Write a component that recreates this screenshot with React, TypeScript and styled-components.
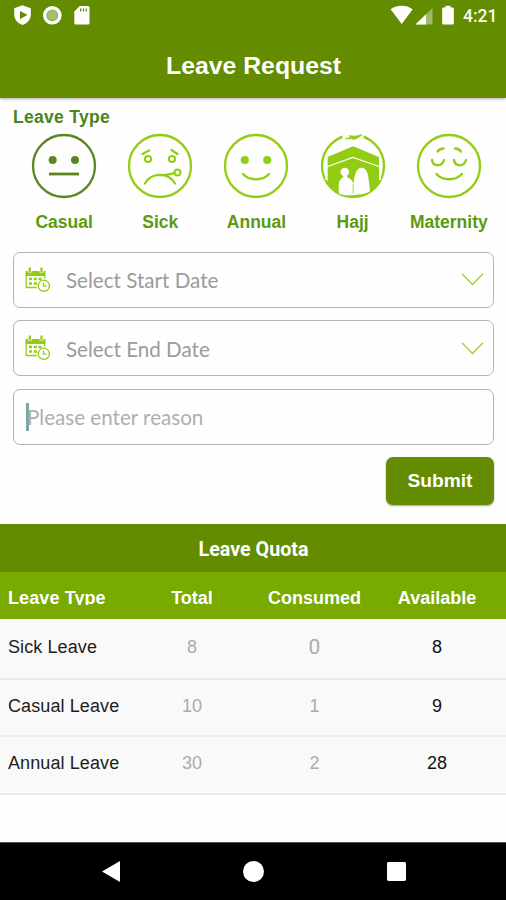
import React from "react";
import styled, { createGlobalStyle } from "styled-components";

const DARK = "#638c00";
const MID = "#78aa00";
const LIME = "#93cd13";
const LABEL = "#5b9a10";

const GlobalStyle = createGlobalStyle`
  * { box-sizing: border-box; }
  body { margin: 0; background: #fff; font-family: "Liberation Sans", Arial, sans-serif; }
  svg { display: block; }
`;

const Screen = styled.div`
  width: 506px;
  height: 900px;
  display: flex;
  flex-direction: column;
  background: #fefefe;
  overflow: hidden;
`;

const Header = styled.header`
  height: 98px;
  flex: none;
  background: ${DARK};
  box-shadow: 0 1px 3px rgba(60, 40, 50, 0.4);
  color: #fff;
`;

const StatusBar = styled.div`
  height: 32px;
  display: flex;
  justify-content: space-between;
`;

const Clock = styled.span`
  font: 500 17.5px/32px Roboto, sans-serif;
  color: #f6faec;
  width: 43px;
`;

const StatusGroup = styled.div`
  display: flex;
`;

const Title = styled.h1`
  margin: 0;
  padding-left: 1px;
  font-size: 24.8px;
  line-height: 68px;
  font-weight: 700;
  text-align: center;
`;

const Form = styled.section`
  height: 426px;
  flex: none;
  padding: 10px 12px 0 13px;
  display: flex;
  flex-direction: column;
`;

const SectionLabel = styled.div`
  height: 20px;
  font-size: 17.5px;
  line-height: 19px;
  letter-spacing: 0.3px;
  font-weight: 700;
  color: #4b8419;
`;

const TypeList = styled.div`
  display: flex;
  margin: 5px 0 0 3px;
  height: 118.5px;
`;

const TypeItem = styled.div`
  width: 96.2px;
  flex: none;
  display: flex;
  flex-direction: column;
  align-items: center;
`;

const TypeName = styled.span`
  margin-top: 13px;
  font-size: 17.5px;
  line-height: 20px;
  font-weight: 700;
  color: ${LABEL};
`;

const Field = styled.div<{ $muted?: boolean }>`
  height: 56px;
  margin-bottom: 12.5px;
  flex: none;
  border: 1.5px solid #b4b4b4;
  border-radius: 7px;
  display: flex;
  align-items: center;
  padding: 0 9px 0 11px;
  font: 400 20.6px/30px Lato, sans-serif;
  color: ${(p) => (p.$muted ? "#aeaeae" : "#9b9b9b")};
`;

const FieldText = styled.span`
  flex: 1;
  margin-left: 15px;
  padding-top: 1px;
`;

const ReasonText = styled.span``;

const Caret = styled.i`
  width: 3px;
  height: 28px;
  margin: 0 -2px 0 1px;
  background: #7ba89a;
`;

const Submit = styled.button`
  align-self: flex-end;
  width: 108px;
  height: 48px;
  padding: 0;
  border: 0;
  border-radius: 7px;
  background: ${DARK};
  box-shadow: 0 1px 2px rgba(0, 0, 0, 0.35);
  color: #fff;
  font: 700 19.2px/48px "Liberation Sans", Arial, sans-serif;
`;

const QuotaTitle = styled.h2`
  margin: 0;
  padding-left: 1px;
  height: 48px;
  flex: none;
  background: ${DARK};
  color: #fff;
  font: 700 19.7px/51px Roboto, sans-serif;
  text-align: center;
`;

const Row = styled.div<{ $height: number }>`
  height: ${(p) => p.$height}px;
  flex: none;
  display: grid;
  grid-template-columns: 122.5px 123px 122px 123px;
  padding-left: 8px;
  align-items: center;
  background: #f9f9f9;
  border-bottom: 2px solid #ebebeb;
  font-size: 18px;
`;

const HeadRow = styled(Row)`
  background: ${MID};
  border-bottom: 0;
  color: #fff;
  font-weight: 700;
  padding-top: 5px;
`;

const HeadCell = styled.span<{ $left?: boolean }>`
  line-height: 20px;
  text-align: center;
  ${(p) =>
    p.$left &&
    `height: 17px; margin-bottom: 3px; overflow: hidden; text-align: left; letter-spacing: 0.1px;`}
`;

const NameCell = styled.span`
  color: #1d1d1d;
  padding-bottom: 3px;
  letter-spacing: 0.1px;
`;

const NumberCell = styled.span<{ $strong?: boolean; $large?: boolean }>`
  text-align: center;
  padding-bottom: 3px;
  color: ${(p) => (p.$strong ? "#111" : "#ababab")};
  ${(p) => p.$large && `font: 400 21px/24px Roboto, sans-serif;`}
`;

const NavBar = styled.nav`
  margin-top: auto;
  height: 58px;
  flex: none;
  background: #000;
  border-top: 1px solid #555;
  display: grid;
  grid-template-columns: 181px 145px 180px;
  align-items: center;
`;

const NavSlot = styled.div<{ $align?: string }>`
  display: flex;
  justify-content: ${(p) => p.$align || "center"};
  padding: 0 61px 0 61px;
`;

type Kind = "casual" | "sick" | "annual" | "hajj" | "maternity";

function Face({ kind }: { kind: Kind }) {
  const c = kind === "casual" ? "#5c8620" : LIME;
  return (
    <svg width="66" height="66" viewBox="0 0 66 66" fill="none" stroke={c} strokeWidth="2.3" strokeLinecap="round">
      {kind !== "hajj" && <circle cx="33" cy="33" r="31" />}
      {kind === "casual" && (
        <>
          <circle cx="21.7" cy="27" r="4" fill={c} stroke="none" />
          <circle cx="44" cy="27" r="4" fill={c} stroke="none" />
          <path d="M18 41h30" strokeWidth="2.8" strokeLinecap="butt" />
        </>
      )}
      {kind === "annual" && (
        <>
          <circle cx="21.8" cy="27" r="4.1" fill={c} stroke="none" />
          <circle cx="44.3" cy="27" r="4.1" fill={c} stroke="none" />
          <path d="M20 41c6 7 20 7 26 0" />
        </>
      )}
      {kind === "sick" && (
        <>
          <circle cx="21" cy="26" r="3.1" strokeWidth="2" />
          <circle cx="45" cy="26" r="3.1" strokeWidth="2" />
          <path d="M15.500 21l6.500-3.500M44.500 17l6 4M18 50.500c6-11 23-12 30 0M31 42c6 1 12-1 16.500-2" />
          <circle cx="50.500" cy="39.500" r="3" strokeWidth="2" />
        </>
      )}
      {kind === "maternity" && (
        <path d="M16 27c1 7 10 7 12 0M38 27c1 7 10 7 12 0M21.500 18.500c1.500-2 4-3 6-3M39 15.500c2.500 0 4.500 1 6 3M20.500 41c6 7 19 7 25.500 0" />
      )}
      {kind === "hajj" && (
        <>
          <circle cx="33" cy="33" r="31" />
          <path d="M22.500 0h21v8h-21z" fill="#fefefe" stroke="none" />
          <path
            d="M7.500 24L33 13.300l26 10.700V49C52 60 44 63.800 33 63.800S14 60 7.500 49z"
            fill={c}
            stroke="none"
          />
          <path d="M7.500 33.500L33 24.500l26 9" stroke="#fefefe" strokeWidth="1.300" />
          <path d="M6.300 23v24M60 23v24" stroke="#fefefe" strokeWidth="2" strokeLinecap="butt" />
          <circle cx="24.800" cy="39" r="4.300" fill="#fefefe" stroke="none" />
          <path
            d="M19.500 61c-1-4-1.200-8-.3-12 .6-2.500 2.300-3.800 4-4.500V41h4v3.500c3 .7 5.300 2.800 6 6.500.8-3.500 1.200-7.500 2.300-10.500 1.200-3.800 3.500-5.700 6-5.700 4.200 0 6 4 6.700 8.700.6 5 1.800 11 1.600 15-5 3.300-24 5-30.300 2.500z"
            fill="#fefefe"
            stroke="none"
          />
          <path d="M33.200 51.500v9" strokeWidth=".8" />
          <path d="M25.500 5.800l6-1.600-2.500-1.500 6 .5 7-1.400-3.500 2.600-4.500 2-2-.6z" fill={c} stroke={c} strokeWidth=".8" />
        </>
      )}
    </svg>
  );
}

function CalendarClock() {
  return (
    <svg width="26" height="26" viewBox="0 0 26 26" fill="none" stroke={LIME} strokeWidth="1.300">
      <path d="M.5 9V4h20v5z" fill={LIME} stroke="none" />
      <path d="M4.800 1v4.500M16.500 1v4.500" stroke="#fefefe" strokeWidth="4" />
      <path d="M4.800.5v4.500M16.500.5v4.500" strokeWidth="2.200" />
      <path d="M1.200 8v12.500h10.500M19.800 8v3.500" />
      <path d="M4 12h3M8.800 12h3M13.500 12h3M4 16.500h3M8.800 16.500h3" strokeWidth="2.600" />
      <circle cx="18.800" cy="18.800" r="5.600" />
      <path d="M18.500 15.800v3.300h3" />
    </svg>
  );
}

function Chevron() {
  return (
    <svg width="23" height="13" viewBox="0 0 23 13" fill="none" stroke="#a0cf38" strokeWidth="1.300">
      <path d="M1 .8L11.500 11.500 22 .8" />
    </svg>
  );
}

function StatusLeft() {
  return (
    <svg width="100" height="32" viewBox="0 0 100 32" fill="#fff">
      <path d="M22.500 5.200l8.300 3v6.500c0 5-4 8.700-8.300 10.300-4.300-1.600-8.300-5.300-8.300-10.300V8.200z" />
      <path d="M20 11l7.500 4-7.500 4z" fill={DARK} />
      <circle cx="52.300" cy="15.300" r="9.300" />
      <circle cx="52.300" cy="15.300" r="5.300" fill="#a9bd6c" stroke="#8fae45" strokeWidth="1.200" />
      <path d="M79.700 6H88a1.500 1.500 0 0 1 1.500 1.500V23a1.500 1.500 0 0 1-1.500 1.500H75.800a1.500 1.500 0 0 1-1.500-1.500V11.500z" />
      <path d="M80.700 8.500v3M83.500 8.500v3M86.300 8.500v3" stroke={DARK} strokeWidth="1.300" />
    </svg>
  );
}

function StatusRight() {
  return (
    <svg width="72" height="32" viewBox="391 0 72 32" fill="#fff">
      <path d="M390.700 9.300c6.500-4.600 15.500-4.600 22 0L401.700 24z" />
      <path d="M432.500 8v16.500h-17z" opacity=".4" />
      <path d="M426 14.300v10.200h-10.500z" />
      <path d="M445.500 5.800h5V7.500h2.300a1 1 0 0 1 1 1v15a1 1 0 0 1-1 1h-9.600a1 1 0 0 1-1-1v-15a1 1 0 0 1 1-1h2.300z" />
    </svg>
  );
}

const leaveTypes: { kind: Kind; name: string }[] = [
  { kind: "casual", name: "Casual" },
  { kind: "sick", name: "Sick" },
  { kind: "annual", name: "Annual" },
  { kind: "hajj", name: "Hajj" },
  { kind: "maternity", name: "Maternity" },
];

const quotas = [
  { name: "Sick Leave", total: 8, consumed: 0, available: 8, height: 61 },
  { name: "Casual Leave", total: 10, consumed: 1, available: 9, height: 57 },
  { name: "Annual Leave", total: 30, consumed: 2, available: 28, height: 58 },
];

export default function App() {
  return (
    <>
      <GlobalStyle />
      <Screen>
        <Header>
          <StatusBar>
            <StatusLeft />
            <StatusGroup>
              <StatusRight />
              <Clock>4:21</Clock>
            </StatusGroup>
          </StatusBar>
          <Title>Leave Request</Title>
        </Header>
        <Form>
          <SectionLabel>Leave Type</SectionLabel>
          <TypeList>
            {leaveTypes.map((t) => (
              <TypeItem key={t.kind}>
                <Face kind={t.kind} />
                <TypeName>{t.name}</TypeName>
              </TypeItem>
            ))}
          </TypeList>
          <Field>
            <CalendarClock />
            <FieldText>Select Start Date</FieldText>
            <Chevron />
          </Field>
          <Field>
            <CalendarClock />
            <FieldText>Select End Date</FieldText>
            <Chevron />
          </Field>
          <Field $muted>
            <Caret />
            <ReasonText>Please enter reason</ReasonText>
          </Field>
          <Submit>Submit</Submit>
        </Form>
        <QuotaTitle>Leave Quota</QuotaTitle>
        <HeadRow $height={47}>
          <HeadCell $left>Leave Type</HeadCell>
          <HeadCell>Total</HeadCell>
          <HeadCell>Consumed</HeadCell>
          <HeadCell>Available</HeadCell>
        </HeadRow>
        {quotas.map((q) => (
          <Row key={q.name} $height={q.height}>
            <NameCell>{q.name}</NameCell>
            <NumberCell>{q.total}</NumberCell>
            <NumberCell $large={q.consumed === 0}>{q.consumed}</NumberCell>
            <NumberCell $strong>{q.available}</NumberCell>
          </Row>
        ))}
        <NavBar>
          <NavSlot $align="flex-end">
            <svg width="18" height="21" viewBox="0 0 18 21" fill="#fff">
              <path d="M0 10.500L18 0v21z" />
            </svg>
          </NavSlot>
          <NavSlot>
            <svg width="21" height="21" viewBox="0 0 21 21" fill="#fff">
              <circle cx="10.500" cy="10.500" r="10.500" />
            </svg>
          </NavSlot>
          <NavSlot $align="flex-start">
            <svg width="19" height="19" viewBox="0 0 20 20" fill="#fff">
              <rect width="20" height="20" rx="1.500" />
            </svg>
          </NavSlot>
        </NavBar>
      </Screen>
    </>
  );
}
